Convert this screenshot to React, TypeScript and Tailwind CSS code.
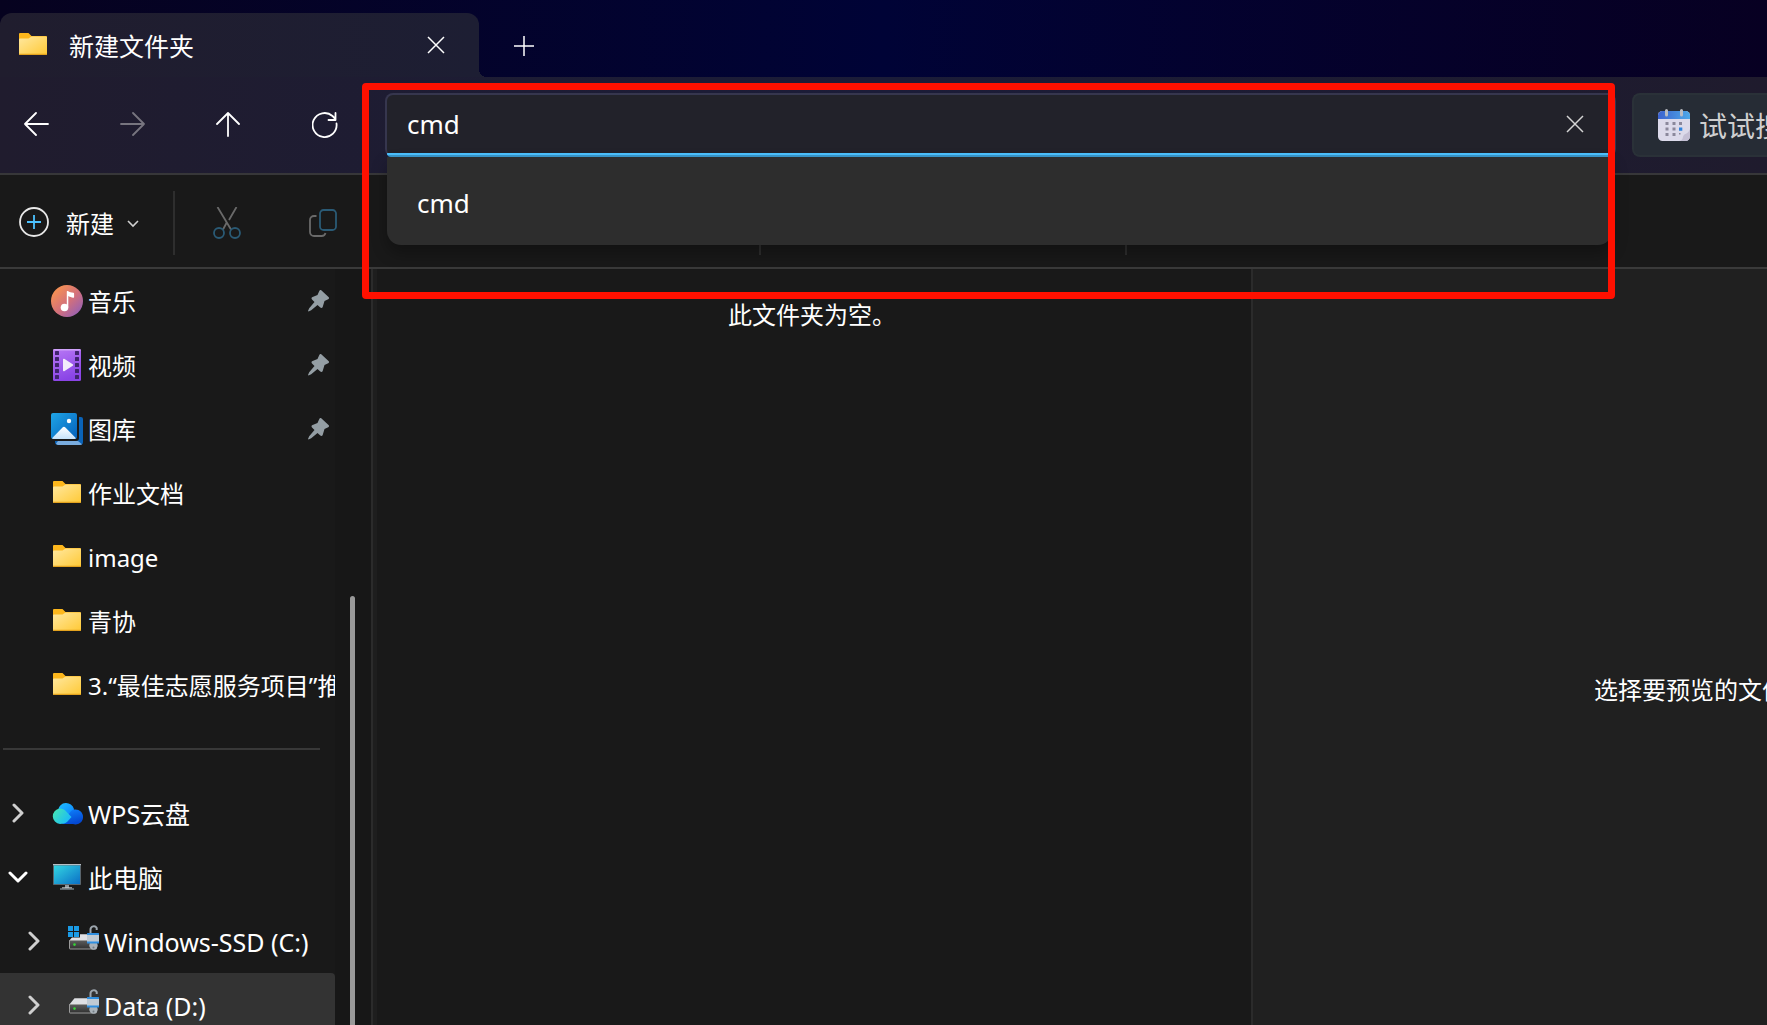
import type { ReactNode } from "react";

const FolderIcon = () => (
  <svg viewBox="0 0 32 32" className="size-8 shrink-0" aria-hidden="true">
    <defs>
      <linearGradient id="folder" x1="0" y1="0" x2="1" y2="1">
        <stop offset="0" stopColor="#ffe8a0" />
        <stop offset="1" stopColor="#ffc935" />
      </linearGradient>
    </defs>
    <path d="M2 5a1 1 0 0 1 1-1h8.5l3 3H29a1 1 0 0 1 1 1v6H2z" fill="#fdb71c" />
    <path d="M2 10.5a1 1 0 0 1 1-1h8.5l3-2H29a1 1 0 0 1 1 1V25a1 1 0 0 1-1 1H3a1 1 0 0 1-1-1z" fill="url(#folder)" />
    <path d="M2 24.7V25a1 1 0 0 0 1 1h26a1 1 0 0 0 1-1v-.3z" fill="#e3a21e" />
  </svg>
);

const MusicIcon = () => (
  <svg viewBox="0 0 32 32" className="size-8 shrink-0" aria-hidden="true">
    <defs>
      <linearGradient id="music" x1="0.1" y1="0.1" x2="0.9" y2="0.9">
        <stop offset="0" stopColor="#f9944f" />
        <stop offset="0.55" stopColor="#d2707c" />
        <stop offset="1" stopColor="#9560b5" />
      </linearGradient>
    </defs>
    <circle cx="16" cy="16" r="16" fill="url(#music)" />
    <circle cx="13.5" cy="22.5" r="3.8" fill="#fff" />
    <path d="M15.8 6.5c0-.6.6-.8 1-.4 1.6 1.4 3.6 1.5 5.6 1.7.5.1.7.4.7.9v3.300c0 .7-.4.9-1 .7-1.500-.4-3-.6-4.800-1.700v11.500h-1.500z" fill="#fff" />
  </svg>
);

const VideoIcon = () => (
  <svg viewBox="0 0 32 32" className="size-8 shrink-0" aria-hidden="true">
    <defs>
      <linearGradient id="video" x1="0" y1="0" x2="0.3" y2="1">
        <stop offset="0" stopColor="#b878f5" />
        <stop offset="1" stopColor="#8a44e6" />
      </linearGradient>
    </defs>
    <rect x="2" width="28" height="32" rx="1.5" fill="url(#video)" />
    <path d="M2 1.5A1.5 1.5 0 0 1 3.500 0h25A1.500 1.500 0 0 1 30 1.500z" fill="#d0a2fa" />
    {[2, 8, 14, 20, 26].map((y) => (
      <g key={y} fill="#40246e">
        <rect x="4" y={y} width="4" height="4" rx=".5" />
        <rect x="24" y={y} width="4" height="4" rx=".5" />
      </g>
    ))}
    <path d="M12 10.500c0-.7.6-1 1.200-.7l8.500 5.400c.6.4.6 1.200 0 1.600l-8.500 5.400c-.6.3-1.200 0-1.200-.7z" fill="#f3ecfb" />
  </svg>
);

const GalleryIcon = () => (
  <svg viewBox="0 0 32 32" className="size-8 shrink-0" aria-hidden="true">
    <defs>
      <linearGradient id="gallery" x1="0" y1="0" x2="1" y2="1">
        <stop offset="0" stopColor="#1fa5e6" />
        <stop offset="1" stopColor="#0460bb" />
      </linearGradient>
      <linearGradient id="hill" x1="0" y1="0" x2="0" y2="1">
        <stop offset="0" stopColor="#fff" />
        <stop offset="1" stopColor="#c6e3fb" />
      </linearGradient>
    </defs>
    <path d="M28 4h2a2 2 0 0 1 2 2v23a3 3 0 0 1-3 3H7a3 3 0 0 1-3-3v-1h21a3 3 0 0 0 3-3z" fill="#0a63b8" />
    <path d="M5 30.500 7 28h20l4 3.200a3 3 0 0 1-2 .8H7a3 3 0 0 1-2-1.500z" fill="#79acdf" />
    <rect width="26" height="26" rx="2" fill="url(#gallery)" />
    <path d="M1 25.200 11.500 14.600a2 2 0 0 1 2.900 0L25 25.200c-.4.5-.9.8-1.500.8h-21c-.6 0-1.100-.3-1.500-.8z" fill="url(#hill)" />
    <circle cx="18" cy="8" r="2.200" fill="#fff" />
  </svg>
);

const CloudIcon = () => (
  <svg viewBox="1 0 32 32" className="size-8 shrink-0" aria-hidden="true">
    <defs>
      <linearGradient id="cloudTop" x1="0" y1="0" x2="1" y2="1">
        <stop offset="0" stopColor="#20c2ff" />
        <stop offset="1" stopColor="#0a7cff" />
      </linearGradient>
      <linearGradient id="cloudLeft" x1="0" y1="0.2" x2="1" y2="0.8">
        <stop offset="0" stopColor="#44e6b4" />
        <stop offset="1" stopColor="#16b6ff" />
      </linearGradient>
      <linearGradient id="cloudRight" x1="0" y1="0" x2="0.4" y2="1">
        <stop offset="0" stopColor="#0f86ff" />
        <stop offset="1" stopColor="#0448d2" />
      </linearGradient>
    </defs>
    <path d="M8 13a8.200 8.200 0 0 1 16-1l-2 8H12z" fill="url(#cloudTop)" />
    <path d="M12 27 21 14a7.500 7.500 0 1 1 2 13z" fill="url(#cloudRight)" />
    <path d="M9.500 11.500c3 0 5 1 7 3.200l5 5.300-4 4.500C15.500 26.300 13 27 10 27a7.800 7.800 0 0 1-.5-15.500z" fill="url(#cloudLeft)" />
  </svg>
);

const ComputerIcon = () => (
  <svg viewBox="0 0 32 32" className="size-8 shrink-0" aria-hidden="true">
    <defs>
      <linearGradient id="screen" x1="0" y1="0" x2="1" y2="1">
        <stop offset="0" stopColor="#33d6e2" />
        <stop offset="1" stopColor="#0a6fc6" />
      </linearGradient>
    </defs>
    <path d="M14 24h4v3h-4z" fill="#8e989f" />
    <rect x="2" y="3" width="28" height="21" rx=".8" fill="#59646c" />
    <path d="M2 3h28v1.200H2z" fill="#b6bfc5" />
    <rect x="3" y="4.500" width="26" height="18.500" fill="url(#screen)" />
    <path d="M9 27h14v2H9z" fill="#5d666c" />
    <path d="M11 26.300h10v1H11z" fill="#c3c9cc" />
  </svg>
);

const DriveIcon = ({ system = false }: { system?: boolean }) => (
  <svg viewBox="-1 0 32 32" className="size-8 shrink-0 overflow-visible" aria-hidden="true">
    <defs>
      <linearGradient id="front" x1="0" y1="0" x2="0" y2="1">
        <stop offset="0" stopColor="#5c5c5c" />
        <stop offset="1" stopColor="#303030" />
      </linearGradient>
    </defs>
    <path d="M1 16 6.500 9.300H24V16z" fill="#dfe0e4" />
    <rect x="1.500" y="15.500" width="27" height="8.500" rx=".5" fill="url(#front)" stroke="#9b9b9b" />
    <circle cx="6.500" cy="19.600" r="1.300" fill="#35d435" />
    {system && (
      <>
        <path d="M0 0h12v12.500H0z" fill="#191919" />
        <path d="M0 1h5v5H0zM6 1h5v5H6zM0 7h5v5H0zM6 7h5v5H6z" fill="#1a9be6" />
      </>
    )}
    <path d="M22.500 9V4.500a3.300 3.300 0 0 1 6.200-1.500V5" fill="none" stroke="#9da6ae" strokeWidth="2" />
    <circle cx="25.500" cy="20.500" r="4.200" fill="#aab2b9" />
    <circle cx="25.500" cy="22.500" r="1" fill="#747d84" />
    <rect x="19" y="8" width="12" height="10.500" rx=".5" fill="#2f8fe0" />
    <rect x="19" y="10" width="12" height="6.500" fill="#c0cad3" />
  </svg>
);

const CalendarIcon = () => (
  <svg viewBox="0 0 32 32" className="size-8 shrink-0" aria-hidden="true">
    <defs>
      <linearGradient id="calendar" x1="0" y1="0" x2="1" y2="0">
        <stop offset="0" stopColor="#3c62cf" />
        <stop offset="1" stopColor="#4ea9e8" />
      </linearGradient>
    </defs>
    <rect y="2" width="32" height="30" rx="4.500" fill="#dcdaea" />
    <path d="M0 10V6.500A4.500 4.500 0 0 1 4.500 2h23A4.500 4.500 0 0 1 32 6.500V10z" fill="url(#calendar)" />
    <path d="M32 20v7.500a4.500 4.500 0 0 1-4.500 4.500H21c5-1 3-4 5-6s4-1 6-6z" fill="#c4bfd4" />
    <path d="M7.500 13h3v3h-3zM14.500 13h3v3h-3zM21 13h3v3h-3zM7.500 18.500h3v3h-3zM14.500 18.500h3v3h-3zM7.500 24h3v3h-3zM14.500 24h3v3h-3zM21 24h1.500v1.500H21z" fill="#8b889b" />
    <path d="M21 18.500h3.300v3.300H21z" fill="#2f83dc" />
    <path d="M8.500 1.500v4.500M23.500 1.500v4.500" stroke="#b9bcc2" strokeWidth="3" strokeLinecap="round" />
  </svg>
);

const PinIcon = () => (
  <svg viewBox="0 0 22 22" className="h-[22px] w-[22px]" fill="#949ea4" aria-hidden="true">
    <path d="M11.300.9c.5-.9 1.400-1.100 2.200-.4l7 6.500c.8.8.7 1.800-.3 2.300L16.500 11l-1.800 6c-.4 1.200-1.500 1.400-2.400.6L9.500 15l-6.300 5.300L.5 21.500l-.5-.5 1.200-2.700L6.500 12 4 9.500c-.9-1-.6-2 .6-2.400l4.900-2z" />
  </svg>
);

const CloseIcon = () => (
  <svg viewBox="0 0 18 18" className="h-[18px] w-[18px]" fill="none" stroke="currentColor" strokeWidth="1.500" aria-hidden="true">
    <path d="M1 1l16 16M17 1 1 17" />
  </svg>
);

const Chevron = ({ open }: { open: boolean }) => (
  <svg viewBox="0 0 20 20" className="size-5" fill="none" stroke={open ? "#fff" : "#cfcfcf"} strokeWidth="3" strokeLinecap="round" strokeLinejoin="round" aria-hidden="true">
    {open ? <path d="m2 6 8 8 8-8" /> : <path d="m6 2 8 8-8 8" />}
  </svg>
);

const quickAccess: { name: string; icon: ReactNode; pinned?: boolean }[] = [
  { name: "音乐", icon: <MusicIcon />, pinned: true },
  { name: "视频", icon: <VideoIcon />, pinned: true },
  { name: "图库", icon: <GalleryIcon />, pinned: true },
  { name: "作业文档", icon: <FolderIcon /> },
  { name: "image", icon: <FolderIcon /> },
  { name: "青协", icon: <FolderIcon /> },
  { name: "3.“最佳志愿服务项目”推", icon: <FolderIcon /> },
];

const tree = [
  { name: "WPS云盘", icon: <CloudIcon />, open: false, nested: false, selected: false },
  { name: "此电脑", icon: <ComputerIcon />, open: true, nested: false, selected: false },
  { name: "Windows-SSD (C:)", icon: <DriveIcon system />, open: false, nested: true, selected: false },
  { name: "Data (D:)", icon: <DriveIcon />, open: false, nested: true, selected: true },
];

const navButtons = [
  { label: "后退", path: "M24 12H1M12 1 1 12l11 11" },
  { label: "前进", path: "M1 12h23M13 1l11 11-11 11", disabled: true },
  { label: "向上", path: "M12 24V1M1 12 12 1l11 11" },
  { label: "刷新", path: "M24.500 11.500A12 12 0 1 1 20.500 4L23.500 7M23.500 1v7h-7" },
];

const TabStrip = () => (
  <div className="flex h-[77px] items-end bg-linear-to-r from-[#06021f] via-[#000336] to-[#070022]">
    <div className="flex h-16 w-[479px] items-center rounded-t-xl bg-linear-to-r from-[#201d2e] to-[#1d1e33] pr-[34px] pl-[17px]">
      <FolderIcon />
      <span className="ml-5 flex-1 pt-[2px] text-[25px] leading-8">新建文件夹</span>
      <button aria-label="关闭标签页">
        <CloseIcon />
      </button>
    </div>
    <span className="size-2 bg-[radial-gradient(circle_at_top_right,transparent_8px,#1d1e33_8px)]" />
    <button aria-label="新标签页" className="ml-[26px] flex h-16 w-[22px] items-center pt-[2px]">
      <svg viewBox="0 0 22 22" className="h-[22px] w-[22px]" fill="none" stroke="currentColor" strokeWidth="1.500">
        <path d="M11 1v20M1 11h20" />
      </svg>
    </button>
  </div>
);

const AddressBar = () => (
  <div className="relative ml-9 h-16 min-w-0 flex-1">
    <div className="flex h-full items-center overflow-hidden rounded-lg border-2 border-b-0 border-[#36364e] bg-[#22222a] pb-1">
      <input
        aria-label="地址"
        defaultValue="cmd"
        className="h-full min-w-0 flex-1 bg-transparent pl-5 text-[26px] text-white outline-none"
      />
      <button aria-label="清除" className="mr-[30px] text-[#d4d4d4]">
        <CloseIcon />
      </button>
    </div>
    <div className="absolute right-1 bottom-0 left-[2px] h-1 rounded-bl border-t-2 border-[#4cc2ff] bg-[#3a98cc]" />

    <ul className="absolute top-full right-1 left-[2px] z-10 h-[88px] rounded-b-[14px] bg-[#2d2d2d] shadow-[0_8px_16px_rgba(0,0,0,0.3)]">
      <li className="flex h-full items-center pt-1 pl-[30px] text-[26px] text-white">cmd</li>
    </ul>

    {/* highlight frame over the address bar and its suggestions */}
    <div className="pointer-events-none absolute -top-[10px] right-px -bottom-[142px] -left-[23px] z-20 rounded border-7 border-[#ff1000]" />
  </div>
);

const NavBar = () => (
  <div className="flex border-b-2 border-[#373739] bg-linear-to-r from-[#201c2e] via-[#1b1c38] to-[#1f1b2d] py-4 pl-[13px]">
    <div className="flex items-center gap-12">
      {navButtons.map((b) => (
        <button
          key={b.label}
          aria-label={b.label}
          disabled={b.disabled}
          className="flex size-12 items-center justify-center text-white disabled:text-[#77757f]"
        >
          <svg viewBox="0 0 26 26" className="h-[26px] w-[26px]" fill="none" stroke="currentColor" strokeWidth="1.800" strokeLinecap="round" strokeLinejoin="round">
            <path d={b.path} />
          </svg>
        </button>
      ))}
    </div>
    <AddressBar />
    <button className="ml-4 flex h-16 w-[135px] shrink-0 items-center gap-[9px] overflow-hidden rounded-l-lg border-2 border-r-0 border-[#2a3138] bg-[#262c35] pl-6 text-[28px] leading-8 whitespace-nowrap text-[#cfcfcf]">
      <CalendarIcon />
      <span className="pt-[2px]">试试搜</span>
    </button>
  </div>
);

const Toolbar = () => (
  <div className="flex h-[94px] items-center border-b-2 border-[#3a3a3a] bg-[#191919] pt-1 pl-[18px]">
    <button className="flex items-center text-2xl leading-8">
      <svg viewBox="0 0 32 32" className="size-8" fill="none" strokeWidth="1.800">
        <circle cx="16" cy="15" r="14" stroke="#e8e8e8" />
        <path d="M16 8v14M9 15h14" stroke="#4cc2ff" />
      </svg>
      <span className="mr-[13px] ml-4 pt-[2px]">新建</span>
      <svg viewBox="0 0 12 12" className="size-3" fill="none" stroke="#d0d0d0" strokeWidth="1.600">
        <path d="m1 4 5 5 5-5" />
      </svg>
    </button>
    <span className="ml-[34px] h-16 w-[2px] bg-[#2e2e2e]" />
    <button aria-label="剪切" disabled className="ml-9">
      <svg viewBox="0 0 32 32" className="size-8" fill="none" strokeWidth="1.800">
        <path d="M6.500 0 20 22.500M25.500 0 18 13M15.500 16 12 22.500" stroke="#6a6a6a" />
        <circle cx="8" cy="26" r="5" stroke="#2a5a75" />
        <circle cx="24" cy="26" r="5" stroke="#2a5a75" />
      </svg>
    </button>
    <button aria-label="复制" disabled className="ml-16">
      <svg viewBox="0 0 32 32" className="size-8" fill="none" strokeWidth="1.800">
        <path d="M9.500 9H7a4 4 0 0 0-4 4v12a4 4 0 0 0 4 4h7.500a4 4 0 0 0 4-3" stroke="#6a6a6a" />
        <rect x="13" y="3" width="16" height="20" rx="3.500" stroke="#2a5a75" />
      </svg>
    </button>
    <span className="ml-[420px] h-16 w-[2px] bg-[#2e2e2e]" />
    <span className="ml-[364px] h-16 w-[2px] bg-[#2e2e2e]" />
  </div>
);

const Sidebar = () => (
  <aside className="flex w-[371px] shrink-0 bg-[#171717]">
    <nav className="w-[335px] bg-[#191919]">
      {quickAccess.map((item) => (
        <a key={item.name} href="#" className="flex h-16 items-center gap-[5px] overflow-hidden pl-[51px] whitespace-nowrap">
          {item.icon}
          <span className="flex-1 pt-[2px]">{item.name}</span>
          {item.pinned && (
            <span className="pr-[5px]">
              <PinIcon />
            </span>
          )}
        </a>
      ))}
      <div className="flex h-16 items-center pr-[15px] pl-[3px]">
        <hr className="w-full border-t-2 border-[#383838]" />
      </div>
      {tree.map((item) => (
        <div
          key={item.name}
          className={`flex h-16 items-center rounded-r ${item.nested ? "pl-4" : ""} ${item.selected ? "bg-[#333333]" : ""}`}
        >
          <button aria-label={item.name} aria-expanded={item.open} className="flex w-9 justify-center">
            <Chevron open={item.open} />
          </button>
          <a href="#" className="ml-[15px] flex items-center gap-[5px] text-[25px] leading-8 whitespace-nowrap">
            {item.icon}
            <span className="pt-[2px]">{item.name}</span>
          </a>
        </div>
      ))}
    </nav>
    <div className="flex flex-1 pt-[327px] pl-[15px]">
      <div className="w-[5px] rounded-t bg-[#999999]" />
    </div>
  </aside>
);

export default function App() {
  return (
    <div className="flex h-screen flex-col overflow-hidden bg-[#191919] font-['Noto_Sans','Noto_Sans_CJK_SC',sans-serif] text-2xl leading-8 text-white">
      <header>
        <TabStrip />
        <NavBar />
        <Toolbar />
      </header>
      <div className="flex min-h-0 flex-1">
        <Sidebar />
        <div className="w-[6px] border-l-2 border-[#2b2b2b] bg-[#1e1e1e]" />
        <main className="flex-1 pt-[30px] pr-1 text-center">此文件夹为空。</main>
        <section className="w-[516px] shrink-0 overflow-hidden border-l-2 border-[#2b2b2b] bg-[#202020] pt-[405px] pl-[341px] whitespace-nowrap">
          选择要预览的文件
        </section>
      </div>
    </div>
  );
}
